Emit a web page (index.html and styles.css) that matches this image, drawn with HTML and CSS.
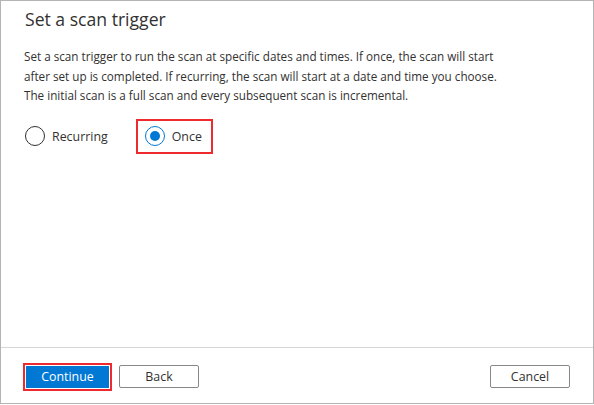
FILE: index.html
```html
<!DOCTYPE html>
<html>
<head>
<meta charset="utf-8">
<link rel="stylesheet" href="styles.css">
</head>
<body>
<div class="panel">
  <div class="content">
    <h1 class="title">Set a scan trigger</h1>
    <p class="desc">Set a scan trigger to run the scan at specific dates and times. If once, the scan will start after set up is completed. If recurring, the scan will start at a date and time you choose. The initial scan is a full scan and every subsequent scan is incremental.</p>
    <div class="options">
      <label class="option">
        <span class="radio"></span>
        <span class="label">Recurring</span>
      </label>
      <label class="option highlight">
        <span class="radio checked"></span>
        <span class="label">Once</span>
      </label>
    </div>
  </div>
  <div class="footer">
    <span class="highlight-btn"><button class="btn primary">Continue</button></span>
    <button class="btn">Back</button>
    <span class="spacer"></span>
    <button class="btn">Cancel</button>
  </div>
</div>
</body>
</html>
```

FILE: styles.css
```css
html, body {
  margin: 0;
  padding: 0;
  background: #ffffff;
}
body {
  font-family: "Open Sans", "Noto Sans", sans-serif;
  color: #323130;
}
.panel {
  box-sizing: border-box;
  width: 594px;
  height: 404px;
  border: 1px solid #b4b4b4;
  display: flex;
  flex-direction: column;
}
.content {
  flex: 1;
  padding: 6px 20px 0 23px;
}
.title {
  margin: 0 0 0 1px;
  font-size: 17.6px;
  font-weight: 400;
  line-height: 24px;
}
.desc {
  margin: 16px 0 0 0;
  max-width: 486px;
  font-size: 11.7px;
  line-height: 19.5px;
}
.options {
  display: flex;
  align-items: center;
  margin-top: 13px;
  gap: 28px;
  padding-left: 1px;
}
.option {
  display: flex;
  align-items: center;
  gap: 7px;
  font-size: 12.4px;
  height: 31px;
  box-sizing: border-box;
}
.option.highlight {
  border: 2px solid #ee2a2f;
  padding: 0 9px 0 7px;
  height: 35px;
}
.radio {
  box-sizing: border-box;
  width: 20px;
  height: 20px;
  border-radius: 50%;
  border: 1px solid #323130;
  display: inline-flex;
  align-items: center;
  justify-content: center;
}
.radio.checked {
  border-color: #0078d4;
}
.radio.checked::after {
  content: "";
  width: 10px;
  height: 10px;
  border-radius: 50%;
  background: #0078d4;
}
.footer {
  border-top: 1px solid #d6d6d6;
  height: 56px;
  box-sizing: border-box;
  display: flex;
  align-items: center;
  padding: 2px 23px 0 22px;
  gap: 7px;
}
.spacer {
  flex: 1;
}
.highlight-btn {
  border: 2px solid #ee2a2f;
  padding: 1px;
  display: inline-flex;
}
.btn {
  font-family: "Open Sans", "Noto Sans", sans-serif;
  font-size: 12.4px;
  color: #323130;
  background: #ffffff;
  border: 1px solid #8a8886;
  border-radius: 2px;
  width: 80px;
  height: 23px;
  padding: 0;
  line-height: 20px;
}
.btn.primary {
  background: #0078d4;
  border-color: #0078d4;
  color: #ffffff;
  width: 83px;
  height: 22px;
  border-radius: 0;
}
```
